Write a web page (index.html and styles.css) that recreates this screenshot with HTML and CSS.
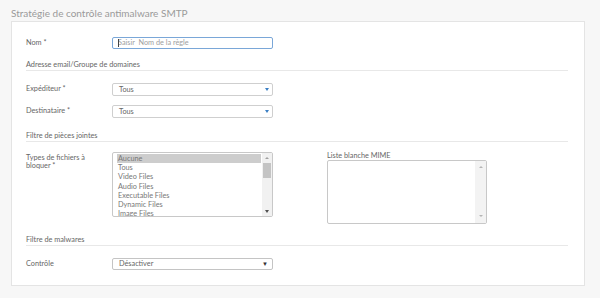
FILE: index.html
```html
<!DOCTYPE html>
<html lang="fr">
<head>
    <meta charset="UTF-8">
    <title>Stratégie de contrôle antimalware SMTP</title>
    <link rel="stylesheet" href="styles.css">
</head>
<body>
    <h1 class="page-title">Stratégie de contrôle antimalware SMTP</h1>

    <div class="panel">
        <div class="row">
            <label class="field-label">Nom *</label>
            <div class="text-input"><span class="caret"></span>Saisir&nbsp; Nom de la règle</div>
        </div>

        <div class="section-head">Adresse email/Groupe de domaines</div>

        <div class="row row-first">
            <label class="field-label">Expéditeur *</label>
            <div class="select">Tous<span class="arrow-blue"></span></div>
        </div>
        <div class="row row-next">
            <label class="field-label">Destinataire *</label>
            <div class="select">Tous<span class="arrow-blue"></span></div>
        </div>

        <div class="section-head section-attach">Filtre de pièces jointes</div>

        <div class="row row-files">
            <label class="field-label wrap">Types de fichiers à bloquer *</label>
            <div class="listbox">
                <ul class="options">
                    <li class="selected">Aucune</li>
                    <li>Tous</li>
                    <li>Video Files</li>
                    <li>Audio Files</li>
                    <li>Executable Files</li>
                    <li>Dynamic Files</li>
                    <li>Image Files</li>
                </ul>
                <div class="scrollbar">
                    <span class="sb-up"></span>
                    <span class="sb-thumb"></span>
                    <span class="sb-down"></span>
                </div>
            </div>
            <div class="mime">
                <div class="mime-label">Liste blanche MIME</div>
                <div class="textarea">
                    <div class="scrollbar light">
                        <span class="sb-up pale"></span>
                        <span class="sb-down pale"></span>
                    </div>
                </div>
            </div>
        </div>

        <div class="section-head section-malware">Filtre de malwares</div>

        <div class="row row-first">
            <label class="field-label">Contrôle</label>
            <div class="select dark">Désactiver<span class="arrow-dark">&#9660;</span></div>
        </div>
    </div>
</body>
</html>
```

FILE: styles.css
```css
* {
    margin: 0;
    padding: 0;
    box-sizing: border-box;
}

body {
    font-family: 'Lato', 'Open Sans', sans-serif;
    background-color: #f7f7f7;
    color: #666;
    width: 600px;
    height: 298px;
    overflow: hidden;
}

.page-title {
    font-size: 10px;
    font-weight: normal;
    line-height: 12px;
    color: #9a9a9a;
    padding: 7px 0 0 11px;
    height: 21px;
}

.panel {
    margin-left: 11px;
    width: 574px;
    height: 265px;
    background-color: #fff;
    border: 1px solid #e4e4e4;
    padding: 15px 16px 0 14px;
}

.row {
    display: grid;
    grid-template-columns: 86px 161px;
    align-items: start;
}

.row-first {
    margin-top: 12px;
}

.row-next {
    margin-top: 9px;
}

.field-label {
    font-size: 7.3px;
    line-height: 9px;
    color: #666;
    padding-top: 1px;
}

.field-label.wrap {
    max-width: 66px;
    line-height: 8px;
    padding-top: 2px;
}

.text-input {
    height: 12px;
    border: 1px solid #7aa7d8;
    border-radius: 2px;
    font-size: 7.3px;
    line-height: 10px;
    color: #a0a0a0;
    padding-left: 5px;
    position: relative;
}

.caret {
    position: absolute;
    left: 5px;
    top: 1px;
    width: 1px;
    height: 8px;
    background-color: #444;
}

.section-head {
    margin-top: 11px;
    font-size: 7.3px;
    line-height: 9px;
    padding-bottom: 1px;
    color: #666;
    border-bottom: 1px solid #e8e8e8;
}

.section-attach {
    margin-top: 13px;
}

.section-malware {
    margin-top: 11px;
}

.select {
    height: 13px;
    border: 1px solid #cfcfcf;
    border-radius: 2px;
    font-size: 7.3px;
    line-height: 11px;
    color: #666;
    padding-left: 6px;
    display: flex;
    justify-content: space-between;
    align-items: center;
}

.select.dark {
    height: 12px;
    line-height: 10px;
    border-color: #c4c4c4;
}

.arrow-blue {
    width: 0;
    height: 0;
    border-left: 2px solid transparent;
    border-right: 2px solid transparent;
    border-top: 3px solid #3b7fc4;
    margin-right: 3px;
}

.arrow-dark {
    font-size: 6px;
    color: #333;
    margin-right: 4px;
}

.row-files {
    grid-template-columns: 86px 161px 54px 160px;
    margin-top: 10px;
}

.listbox {
    height: 65px;
    border: 1px solid #c8c8c8;
    border-radius: 2px;
    display: flex;
    overflow: hidden;
    grid-column: 2;
}

.options {
    list-style: none;
    flex: 1;
    padding: 1px 0 0 4px;
    font-size: 7.3px;
    line-height: 9.2px;
    color: #777;
}

.options li {
    padding-left: 1px;
    white-space: nowrap;
}

.options .selected {
    background-color: #cdcdcd;
    margin-right: 1px;
}

.scrollbar {
    width: 10px;
    background-color: #f1f1f1;
    display: flex;
    flex-direction: column;
    align-items: center;
    padding: 4px 0 3px;
}

.sb-up {
    width: 0;
    height: 0;
    border-left: 2px solid transparent;
    border-right: 2px solid transparent;
    border-bottom: 2px solid #a0a0a0;
}

.sb-thumb {
    width: 8px;
    height: 15px;
    margin-top: 4px;
    background-color: #c4c4c4;
}

.sb-down {
    width: 0;
    height: 0;
    margin-top: auto;
    border-left: 2px solid transparent;
    border-right: 2px solid transparent;
    border-top: 3px solid #505050;
}

.sb-up.pale {
    border-bottom-color: #b5b5b5;
}

.sb-down.pale {
    border-top-color: #b5b5b5;
    border-top-width: 2px;
}

.mime {
    grid-column: 4;
    margin-top: -1px;
}

.mime-label {
    font-size: 7.3px;
    line-height: 9px;
    color: #666;
}

.textarea {
    height: 64px;
    border: 1px solid #c8c8c8;
    border-radius: 2px;
    display: flex;
    justify-content: flex-end;
}

.scrollbar.light {
    background-color: #f3f3f3;
    width: 11px;
    padding: 5px 0 6px;
}
```
